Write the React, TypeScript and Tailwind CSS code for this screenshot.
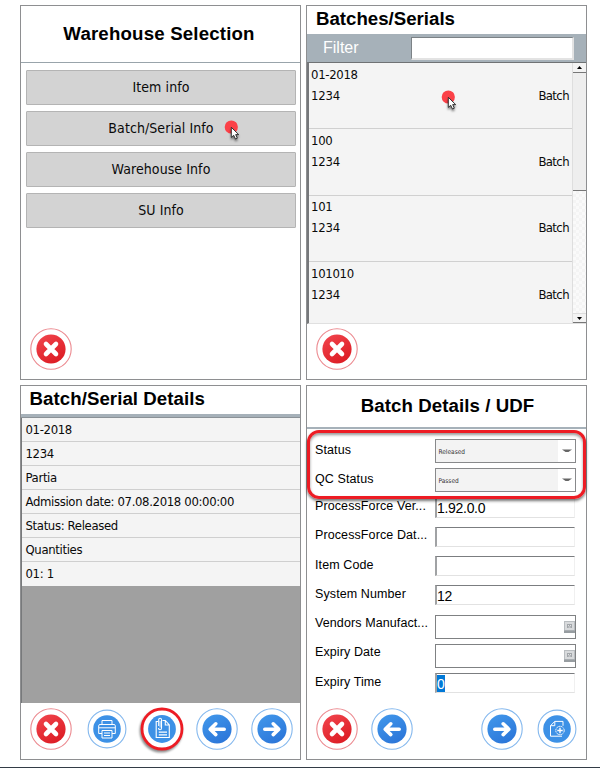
import React from "react";

const TITLE = "font-['Liberation_Sans',Arial,sans-serif] font-bold text-[18.67px] leading-[22px] text-black whitespace-nowrap";
const FACE = "font-['DejaVu_Sans_Condensed','DejaVu_Sans',sans-serif] [font-stretch:condensed] leading-[16px] text-[#0a0a0a] whitespace-nowrap";

function Ring({ kind, small = false, children }: { kind: "red" | "blue"; small?: boolean; children: React.ReactNode }) {
  const red = kind === "red";
  return (
    <svg width="42" height="42" viewBox="-21 -21 42 42" className="block shrink-0 overflow-visible">
      <defs>
        <linearGradient id="redFill" x1="0.2" y1="0" x2="0.8" y2="1">
          <stop offset="0" stopColor="#f0434b" />
          <stop offset="1" stopColor="#dc1a22" />
        </linearGradient>
        <linearGradient id="blueFill" x1="0.2" y1="0" x2="0.8" y2="1">
          <stop offset="0" stopColor="#4096ea" />
          <stop offset="1" stopColor="#2a74d8" />
        </linearGradient>
      </defs>
      <circle r={small ? 18.9 : 20.2} fill="#fff" stroke={red ? "#ec8a90" : "#84b8ee"} strokeWidth="1.1" />
      <circle r={small ? 13.8 : 14.6} fill={red ? "url(#redFill)" : small ? "#3d91e6" : "url(#blueFill)"} />
      {children}
    </svg>
  );
}

const CloseButton = () => (
  <Ring kind="red">
    <path d="M-5-5 5 5M5-5-5 5" stroke="#fff" strokeWidth="4.6" strokeLinecap="round" />
  </Ring>
);

const ArrowButton = ({ right = false }: { right?: boolean }) => (
  <Ring kind="blue">
    <g transform={right ? "scale(-1 1)" : undefined}>
      <path d="M7.2 0.2H-6M-1.2-5.2-6.8.2-1.2 5.6" fill="none" stroke="#fff" strokeWidth="3.6" strokeLinecap="round" strokeLinejoin="round" />
    </g>
  </Ring>
);

const PrintButton = () => (
  <Ring kind="blue" small>
    <g fill="none" stroke="#fff" strokeWidth="1">
      <path d="M-5-4.5V-8.5H5V-4.5M-5 4.5H-8.3V-3.2Q-8.3-4.5-7-4.5H7Q8.3-4.5 8.3-3.2V4.5H5" />
      <path d="M-8.3-1.2H8.3" />
      <path d="M-5 1.5H5V9H-5ZM-3 4H3M-3 6.5H3" />
    </g>
  </Ring>
);

const DocumentButton = () => (
  <svg width="42" height="42" viewBox="-21 -21 42 42" className="block shrink-0 overflow-visible drop-shadow-[-1px_2px_1px_rgba(0,0,0,0.45)]">
    <circle r="20" fill="#fff" stroke="#ed1c24" strokeWidth="2.8" />
    <circle r="13.9" fill="#3d91e6" />
    <g fill="none" stroke="#fff" strokeWidth="1.1">
      <path d="M-3.8-7.5H-5.8V8.5H7.3V-4L3.3-8.5H0.5M3.3-8.5V-4H7.3" />
      <path d="M-3.3-3V-9.2Q-3.3-10.8-1.9-10.8T-.5-9.2V-1Q-.5.7-2 .7T-3.5-1" />
      <path d="M-1.9-8V-1.5" strokeWidth=".8" />
      <path d="M-3.2 3.2H5M-3.2 5.8H5" strokeWidth="1.2" />
    </g>
  </svg>
);

const AddDocumentButton = () => (
  <Ring kind="blue" small>
    <g fill="none" stroke="#fff" strokeWidth="1">
      <path d="M6-3.2V-7.6H-2.2L-6.5-3.3V7.2H5M-2.2-7.6V-3.3H-6.5" />
      <circle cx="3" cy="1.5" r="4.2" fill="#3d91e6" strokeDasharray="1.6 .6" />
      <path d="M3-1.2V4.2M.3 1.5H5.7" strokeWidth="1.4" />
    </g>
  </Ring>
);

const Pointer = () => (
  <svg width="20" height="24" viewBox="0 0 20 24" className="block overflow-visible">
    <circle cx="7.3" cy="7" r="6.6" fill="#fb4148" />
    <path d="M7.3 7.3V17.4L9.7 15.3 11.5 19 13.3 18.2 11.7 14.6H14.7Z" fill="#fff" stroke="#222" strokeWidth=".9" className="drop-shadow-[0px_2px_1px_rgba(0,0,0,0.5)]" />
  </svg>
);

function Panel({ children }: { children: React.ReactNode }) {
  return <section className="relative flex h-[375px] w-[281px] flex-col border border-[#8e8f91] bg-white">{children}</section>;
}

function SelectionPanel() {
  const items = ["Item info", "Batch/Serial Info", "Warehouse Info", "SU Info"];
  return (
    <Panel>
      <header className="flex h-[57px] items-center justify-center border-b border-[#99a4ab] pr-[3px] pb-px">
        <h1 className={TITLE + " tracking-[0.18px]"}>Warehouse Selection</h1>
      </header>
      <div className="flex flex-col gap-[6px] pt-[7px] pl-[5px]">
        {items.map((t) => (
          <button key={t} className="flex h-[35px] w-[270px] items-center justify-center rounded-[1px] border border-[#b4b4b4] bg-[#d3d3d3] pb-[2px]">
            <span className={FACE + " text-[14px] tracking-[0.08px]"}>{t}</span>
          </button>
        ))}
      </div>
      <div className="absolute top-[114px] left-[203px]"><Pointer /></div>
      <footer className="mt-auto flex pb-[9px] pl-[9px]"><CloseButton /></footer>
    </Panel>
  );
}

function BatchesPanel() {
  return (
    <Panel>
      <header className="h-[28px] pt-[2px] pl-[9px]"><h1 className={TITLE}>Batches/Serials</h1></header>
      <div className="flex h-[28px] items-center bg-[#a6b1b9] pl-[16px]">
        <span className="w-[88px] font-['Liberation_Sans',Arial,sans-serif] text-[16px] leading-[20px] text-white">Filter</span>
        <div className="h-[23px] w-[163px] border-t border-r-2 border-b-2 border-l border-t-[#7c8286] border-r-[#e3e3e3] border-b-[#e3e3e3] border-l-[#7c8286] bg-white" />
      </div>
      <div className="flex h-[262px] border-t border-b border-l-2 border-t-[#6f7274] border-b-[#e0e0e0] border-l-[#75777a] bg-[#f4f4f4]">
        <div className="flex w-[263px] flex-col overflow-hidden">
          {["01-2018", "100", "101", "101010"].map((n) => (
            <div key={n} className="h-[66.3px] shrink-0 border-b border-[#d0d0d0] pt-[3.7px] pr-[3px] pl-[2px]">
              <div className={FACE + " text-[13px] tracking-[-0.3px]"}>{n}</div>
              <div className={FACE + " mt-[5px] flex justify-between text-[13px]"}>
                <span className="tracking-[-0.2px]">1234</span>
                <span className="tracking-[-0.6px]">Batch</span>
              </div>
            </div>
          ))}
        </div>
        <div className="flex w-[14px] flex-col border-l border-[#dedede] bg-[#f8f8f8]">
          <div className="flex h-[10px] items-center justify-center border-b border-[#777] bg-[#f3f3f3]">
            <svg width="5" height="3"><path d="M0 3 2.5 0 5 3Z" fill="#000" /></svg>
          </div>
          <div className="h-[118px] border-b border-[#777] bg-[#eeeeee]" />
          <div className="grow bg-[repeating-conic-gradient(#f4f4f4_0_25%,#fafafa_0_50%)] bg-[length:6px_6px]" />
          <div className="flex h-[10px] items-center justify-center border-t border-b border-t-[#ddd] border-b-[#777] bg-[#f3f3f3]">
            <svg width="5" height="3"><path d="M0 0H5L2.5 3Z" fill="#000" /></svg>
          </div>
        </div>
      </div>
      <div className="absolute top-[84px] left-[134px]"><Pointer /></div>
      <footer className="mt-auto flex pb-[9px] pl-[9px]"><CloseButton /></footer>
    </Panel>
  );
}

function DetailsPanel() {
  const rows = ["01-2018", "1234", "Partia", "Admission date: 07.08.2018 00:00:00", "Status: Released", "Quantities", "01: 1"];
  return (
    <Panel>
      <header className="h-[28px] pt-[2px] pl-[8.5px]"><h1 className={TITLE + " tracking-[0.06px]"}>Batch/Serial Details</h1></header>
      <div className="h-[4px] border-b border-[#8b9297] bg-[#a6b1b9]" />
      <div className="h-[285px] border-l border-[#77797b] bg-[#a0a0a0]">
        {rows.map((r) => (
          <div key={r} className="flex h-[24px] items-center border-b border-[#cfcfcf] bg-[#f4f4f4] pt-px pl-[3.5px] last:border-[#f4f4f4]">
            <span className={FACE + " text-[13px] tracking-[-0.35px]"}>{r}</span>
          </div>
        ))}
      </div>
      <footer className="mt-auto flex pb-[9px] pl-[9px]">
        <CloseButton />
        <div className="ml-[14.3px]"><PrintButton /></div>
        <div className="ml-[13px]"><DocumentButton /></div>
        <div className="ml-[13px]"><ArrowButton /></div>
        <div className="ml-[13px]"><ArrowButton right /></div>
      </footer>
    </Panel>
  );
}

type Field = { label: string; kind: "combo" | "text" | "date" | "selected"; value?: string };

const FIELDS: Field[] = [
  { label: "Status", kind: "combo", value: "Released" },
  { label: "QC Status", kind: "combo", value: "Passed" },
  { label: "ProcessForce Ver...", kind: "text", value: "1.92.0.0" },
  { label: "ProcessForce Dat...", kind: "text" },
  { label: "Item Code", kind: "text" },
  { label: "System Number", kind: "text", value: "12" },
  { label: "Vendors Manufact...", kind: "date" },
  { label: "Expiry Date", kind: "date" },
  { label: "Expiry Time", kind: "selected", value: "0" },
];

function FieldBox({ kind, value }: Field) {
  if (kind === "combo")
    return (
      <div className="flex h-[24px] w-[141px] border border-[#88898b] bg-white">
        <div className="flex w-[122px] items-center bg-[#f3f3f3] pt-px pl-[2.5px]">
          <span className="font-['DejaVu_Sans_Condensed','DejaVu_Sans',sans-serif] text-[6.5px] leading-[8px] text-[#333]">{value}</span>
        </div>
        <div className="flex grow items-center justify-center">
          <svg width="10" height="4"><path d="M0 .5H10L6.5 3H3.5Z" fill="#666" /></svg>
        </div>
      </div>
    );
  if (kind === "date")
    return (
      <div className="flex h-[24px] w-[141px] items-end justify-end border border-[#7f8183] bg-white pb-[5px]">
        <svg width="11" height="12" viewBox="0 0 11 12">
          <rect width="11" height="12" fill="#b9bdc0" />
          <rect x="1" y="1" width="9" height="8" fill="#d8dadc" />
          <rect x="3" y="3" width="5" height="4" fill="#a2a6aa" />
          <path d="M4 4.5H5M6 4.5H7M4.5 6H6.5" stroke="#f4f4f4" strokeWidth=".8" />
          <rect y="9.5" width="11" height="2.5" fill="#979da1" />
        </svg>
      </div>
    );
  return (
    <div className="flex h-[20px] w-[140px] items-center border-t border-r border-b border-l-2 border-t-[#7b7d80] border-r-[#f0f0f0] border-b-[#e2e2e2] border-l-[#a0a2a4] bg-white font-['Liberation_Sans',Arial,sans-serif] text-[14px] tracking-[-0.3px] text-black">
      <span className={kind === "selected" ? "h-[17px] w-[8px] bg-[#0078d7] leading-[18px] text-white" : "pt-px leading-[18px]"}>{value}</span>
    </div>
  );
}

function UdfPanel() {
  return (
    <Panel>
      <header className="flex h-[43px] items-center justify-center border-b-2 border-[#a6b1b9] pb-[2px] pl-[2px]">
        <h1 className={TITLE + " tracking-[0.08px]"}>Batch Details / UDF</h1>
      </header>
      <div className="flex flex-col pt-[10px] pl-[8px]">
        {FIELDS.map((f) => (
          <div key={f.label} className="flex h-[29.3px]">
            <label
              className={
                "w-[120px] font-['Liberation_Sans',Arial,sans-serif] text-[12.5px] leading-[15px] tracking-[0.1px] whitespace-nowrap text-black " +
                (f.kind === "combo" ? "pt-[3.5px]" : "pt-[1.4px]")
              }
            >
              {f.label}
            </label>
            <FieldBox {...f} />
          </div>
        ))}
      </div>
      <div className="absolute top-[44px] left-0 h-[69px] w-[279px] rounded-[12px] border-[3.5px] border-[#ed1c24] shadow-[0_2px_3px_rgba(0,0,0,0.55),inset_0_2px_3px_rgba(0,0,0,0.4)]" />
      <footer className="mt-auto flex pb-[9px] pl-[9px]">
        <CloseButton />
        <div className="ml-[13.3px]"><ArrowButton /></div>
        <div className="ml-[67.7px]"><ArrowButton right /></div>
        <div className="ml-[13.3px]"><AddDocumentButton /></div>
      </footer>
    </Panel>
  );
}

export default function App() {
  return (
    <main className="flex h-[768px] w-[600px] flex-col overflow-hidden bg-white">
      <div className="grid grid-cols-[281px_281px] gap-[5px] pt-[5px] pl-[20px]">
        <SelectionPanel />
        <BatchesPanel />
        <DetailsPanel />
        <UdfPanel />
      </div>
      <div className="mt-auto h-px bg-[#333c46]" />
    </main>
  );
}
